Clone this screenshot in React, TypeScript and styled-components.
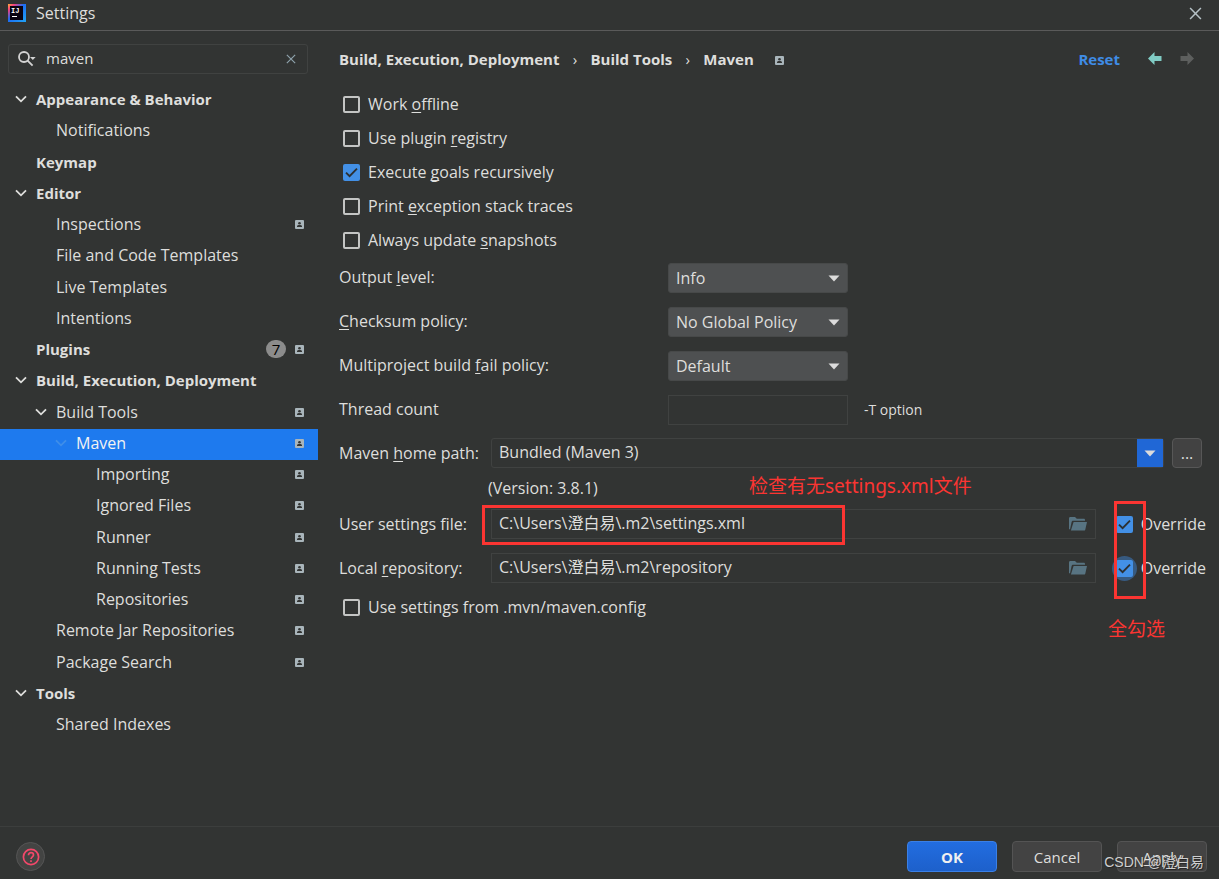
import React, { useState } from 'react';
import styled, { createGlobalStyle, css } from 'styled-components';

const color = {
  bg: '#323433',
  text: '#dededc',
  border: '#404241',
  line: '#5a5a5a',
  blue: '#1e7aee',
  link: '#3f8ce6',
  mark: '#fb3532',
  badge: '#a9b5bb',
  folder: '#587482',
};

const Global = createGlobalStyle`
  *, *::before, *::after { box-sizing: border-box; }
  body {
    margin: 0;
    background: ${color.bg};
    color: ${color.text};
    font: 16px/20px 'Open Sans', 'Noto Sans CJK SC', sans-serif;
  }
  button, input, select { font: inherit; color: inherit; margin: 0; }
  button { padding: 0; border: 0; background: none; }
`;

const Window = styled.div`
  display: flex;
  flex-direction: column;
  min-height: 100vh;
`;

const TitleBar = styled.header`
  display: flex;
  align-items: center;
  height: 31px;
  padding: 0 17px 4px 8px;
  gap: 10px;
  border-bottom: 1px solid ${color.line};
`;

const Title = styled.h1`
  flex: 1;
  margin: 0;
  font-size: 16px;
  font-weight: 400;
`;

const IconButton = styled.button`
  display: grid;
  place-items: center;
`;

const Body = styled.div`
  display: flex;
  flex: 1;
`;

const Sidebar = styled.aside`
  flex: 0 0 318px;
  padding-top: 13px;
`;

const SearchBox = styled.label`
  display: flex;
  align-items: center;
  height: 30px;
  margin: 0 10px 11px 8px;
  padding: 0 11px 0 9px;
  gap: 10px;
  border: 1px solid ${color.border};
  border-radius: 3px;
`;

const SearchInput = styled.input`
  flex: 1;
  min-width: 0;
  padding: 0 0 2px;
  border: 0;
  outline: 0;
  background: none;
  font-size: 15px;
`;

const Tree = styled.ul`
  margin: 0;
  padding: 0;
  list-style: none;
`;

const TreeItem = styled.li`
  &:nth-child(4n + 2) { margin-bottom: 1px; }
`;

const TreeRow = styled.button<{ $depth: number; $bold?: boolean; $selected?: boolean }>`
  display: flex;
  align-items: center;
  width: 100%;
  height: 31px;
  padding: 0 14px 3px ${(p) => 15 + p.$depth * 20}px;
  gap: 9px;
  text-align: left;
  font-size: ${(p) => (p.$bold ? 15 : 16)}px;
  font-weight: ${(p) => (p.$bold ? 700 : 400)};
  ${(p) => p.$selected && css`
    background: ${color.blue};
    color: #f2f2f2;
  `}
`;

const Twisty = styled.span<{ $dim?: boolean }>`
  display: grid;
  place-items: center;
  width: 12px;
  color: ${(p) => (p.$dim ? '#3f8ee8' : color.text)};
`;

const TreeLabel = styled.span`
  flex: 1;
`;

const Count = styled.span`
  width: 20px;
  height: 18px;
  border-radius: 9px;
  background: #8c8c8c;
  color: #000;
  line-height: 18px;
  text-align: center;
  font-weight: 400;
`;

const Main = styled.main`
  flex: 1;
  min-width: 0;
  padding: 13px 13px 0 21px;
`;

const Crumbs = styled.nav`
  display: flex;
  align-items: center;
  height: 31px;
  margin-bottom: 12px;
  padding: 0 11px 2px 0;
  font-size: 15px;
  font-weight: 700;
`;

const CrumbSeparator = styled.span`
  width: 31px;
  text-align: center;
  font-weight: 400;
`;

const CrumbBadge = styled.span`
  flex: 1;
  padding-left: 21px;
`;

const ResetLink = styled.a`
  margin-right: 27px;
  color: ${color.link};
  text-decoration: none;
`;

const HistoryButton = styled(IconButton)<{ $off?: boolean }>`
  width: 16px;
  margin-right: ${(p) => (p.$off ? 0 : 16)}px;
  color: ${(p) => (p.$off ? '#5d5f5e' : '#80cbc4')};
`;

const CheckLabel = styled.label`
  display: flex;
  align-items: center;
  height: 34px;
  gap: 8px;
`;

const CheckRow = styled(CheckLabel)`
  padding-left: 4px;
`;

const Tick = styled.span<{ $focus?: boolean }>`
  display: grid;
  place-items: center;
  width: 17px;
  height: 17px;
  border-radius: 50%;
  box-shadow: ${(p) => (p.$focus ? '0 0 0 4px #375a80' : 'none')};
  background: ${(p) => (p.$focus ? '#375a80' : 'none')};
  > * { grid-area: 1 / 1; }
  svg { pointer-events: none; }
`;

const TickInput = styled.input`
  appearance: none;
  width: 17px;
  height: 17px;
  border: 2px solid #c4c5c4;
  border-radius: 2px;
  &:checked {
    border: 0;
    background: #4390e6;
  }
`;

const Mnemonic = styled.span`
  text-decoration: underline;
  text-underline-offset: 2px;
  text-decoration-skip-ink: none;
`;

const Fields = styled.div`
  display: grid;
  grid-template-columns: 329px 1fr;
  grid-auto-rows: 30px;
  row-gap: 14px;
  align-items: center;
  margin: 6px 0 13px;
`;

const FieldLabel = styled.label`
  padding-bottom: 3px;
`;

const SelectBox = styled.span`
  display: grid;
  align-items: center;
  width: 180px;
  > * { grid-area: 1 / 1; }
  svg { justify-self: end; margin-right: 8px; pointer-events: none; }
`;

const Select = styled.select`
  appearance: none;
  width: 100%;
  height: 30px;
  padding: 0 30px 0 7px;
  border: 1px solid #474949;
  border-radius: 3px;
  background: #4e5051;
`;

const Inline = styled.div`
  display: flex;
  align-items: center;
  gap: 16px;
`;

const ThreadInput = styled.input`
  width: 180px;
  height: 30px;
  border: 1px solid ${color.border};
  background: none;
`;

const Hint = styled.span`
  font-size: 14px;
`;

const PathRow = styled.div<{ $end?: number }>`
  position: relative;
  display: flex;
  align-items: center;
  height: 30px;
  padding-right: ${(p) => p.$end ?? 0}px;
`;

const PathGroup = styled.div`
  display: grid;
  row-gap: 14px;
  margin-bottom: 7px;
`;

const PathLabel = styled.label`
  flex: 0 0 152px;
`;

const PathBox = styled.div<{ $round?: boolean }>`
  display: flex;
  flex: 1;
  align-items: center;
  height: 30px;
  border: 1px solid ${color.border};
  border-radius: ${(p) => (p.$round ? 3 : 0)}px;
`;

const PathInput = styled.input`
  flex: 1;
  min-width: 0;
  padding: 0 7px 2px;
  border: 0;
  outline: 0;
  background: none;
`;

const BrowseButton = styled(IconButton)`
  margin-right: 8px;
`;

const DropButton = styled(IconButton)`
  align-self: stretch;
  width: 26px;
  background: #2067d6;
`;

const MoreButton = styled.button`
  width: 30px;
  height: 30px;
  margin-left: 8px;
  border: 1px solid #575757;
  border-radius: 4px;
  background: #424242;
`;

const OverrideLabel = styled(CheckLabel)`
  margin-left: 20px;
`;

const Version = styled.p`
  margin: 0;
  padding-left: 149px;
  height: 41px;
  line-height: 41px;
`;

const Frame = styled.div`
  position: absolute;
  border: 3px solid ${color.mark};
  pointer-events: none;
`;

const FileFrame = styled(Frame)`
  left: 143px;
  top: -4px;
  width: 363px;
  height: 40px;
`;

const TickFrame = styled(Frame)`
  right: 60px;
  top: -52px;
  width: 32px;
  height: 98px;
`;

const Note = styled.span`
  position: absolute;
  color: ${color.mark};
  font: 19px/24px 'Noto Sans', 'Noto Sans CJK SC', sans-serif;
  white-space: nowrap;
`;

const FileNote = styled(Note)`
  left: 410px;
  top: -35px;
`;

const TickNote = styled(Note)`
  right: 41px;
  top: 64px;
`;

const Footer = styled.footer`
  position: relative;
  display: flex;
  align-items: center;
  gap: 15px;
  padding: 14px 12px 7px 16px;
  border-top: 1px solid #3c3e3d;
`;

const HelpButton = styled(IconButton)`
  width: 29px;
  height: 29px;
  margin-right: auto;
  border: 1px solid #555;
  border-radius: 50%;
  background: #434443;
`;

const ActionButton = styled.button<{ $primary?: boolean }>`
  width: 90px;
  height: 31px;
  border: 1px solid ${(p) => (p.$primary ? '#3b80e6' : '#545454')};
  border-radius: 4px;
  background: ${(p) => (p.$primary ? 'linear-gradient(#226de0, #1d60cb)' : '#434343')};
  color: ${(p) => (p.$primary ? '#f0f0f0' : color.text)};
  font-size: 15px;
  font-weight: ${(p) => (p.$primary ? 700 : 400)};
`;

const Watermark = styled.span`
  position: absolute;
  right: 15px;
  bottom: 7px;
  color: #cfcfcf;
  font: 14px/20px 'Liberation Sans', 'Noto Sans CJK SC', sans-serif;
  text-shadow: 1px 1px 1px #222;
  pointer-events: none;
`;

const LogoIcon = () => (
  <svg width="18" height="18" viewBox="0 0 18 18" aria-hidden="true">
    <defs>
      <linearGradient id="logo" x1="0" y1="0" x2="1" y2="1">
        <stop offset="0" stopColor="#fdb03c" />
        <stop offset="0.18" stopColor="#f8407c" />
        <stop offset="0.45" stopColor="#1c6cf2" />
        <stop offset="1" stopColor="#20a5f5" />
      </linearGradient>
    </defs>
    <rect width="18" height="18" fill="url(#logo)" />
    <rect x="2" y="2" width="13" height="14" fill="#0a0310" />
    <text x="3" y="9" fill="#fff" fontSize="7" fontWeight="700" fontFamily="Liberation Mono, monospace">IJ</text>
    <rect x="4" y="12" width="5" height="1" fill="#fff" />
  </svg>
);

const CloseIcon = ({ size, stroke }: { size: number; stroke: string }) => (
  <svg width={size} height={size} viewBox="0 0 12 12" fill="none" stroke={stroke} strokeWidth="1.4" aria-hidden="true">
    <path d="M1 1l10 10M11 1L1 11" />
  </svg>
);

const SearchIcon = () => (
  <svg width="18" height="16" viewBox="0 0 18 16" fill="none" stroke="#d4d4d4" strokeWidth="1.8" aria-hidden="true">
    <circle cx="6" cy="6" r="5" />
    <path d="M9.6 9.6l5 5" />
    <path d="M12 6h5.6l-2.8 3z" fill="#d4d4d4" stroke="none" />
  </svg>
);

const ChevronIcon = () => (
  <svg width="12" height="8" viewBox="0 0 12 8" fill="none" stroke="currentColor" strokeWidth="1.8" aria-hidden="true">
    <path d="M1 1.3l5 5 5-5" />
  </svg>
);

const ProjectBadge = () => (
  <svg width="9" height="9" viewBox="0 0 9 9" aria-hidden="true">
    <rect width="9" height="9" rx="1" fill={color.badge} />
    <circle cx="4.5" cy="3.2" r="1.3" fill={color.bg} />
    <path d="M2 7V6.200c0-.8 1.200-1.200 2.500-1.200S7 5.400 7 6.200V7z" fill={color.bg} />
  </svg>
);

const CheckIcon = () => (
  <svg width="17" height="17" viewBox="0 0 17 17" fill="none" stroke="#2c3033" strokeWidth="1.9" aria-hidden="true">
    <path d="M3 8.6l3.6 3.6L14 4.6" />
  </svg>
);

const TriangleIcon = () => (
  <svg width="12" height="7" viewBox="0 0 12 7" fill="#dcdcdc" aria-hidden="true">
    <path d="M.5.5h11L6 6.5z" />
  </svg>
);

const FolderIcon = () => (
  <svg width="18" height="14" viewBox="0 0 18 14" fill={color.folder} aria-hidden="true">
    <path d="M0 12V1.5C0 .7.5 0 1.3 0H6l1.8 1.8h7c.7 0 1.2.5 1.2 1.2v.8H4.3c-.9 0-1.5.4-1.7 1.2L1 12.5z" />
    <path d="M4.6 5H18l-1.7 7.4c-.2.8-.7 1.2-1.5 1.2H1.9z" />
  </svg>
);

const ArrowIcon = ({ flip }: { flip?: boolean }) => (
  <svg width="14" height="13" viewBox="0 0 14 13" fill="currentColor" aria-hidden="true">
    <path d={flip ? 'M14 6.5L7.5 0v4H.5v5h7v4z' : 'M0 6.5L6.5 0v4h7v5h-7v4z'} />
  </svg>
);

const HelpIcon = () => (
  <svg width="18" height="18" viewBox="0 0 18 18" fill="none" stroke="#f2486a" strokeWidth="1.7" aria-hidden="true">
    <circle cx="9" cy="9" r="7.6" />
    <path d="M6.500 7.2c0-1.5 1.1-2.500 2.500-2.500s2.500 1 2.500 2.300c0 1.700-2.500 2-2.500 4" />
    <path d="M9 12.2v1.7" />
  </svg>
);

type Node = { label: string; depth: number; bold?: boolean; open?: boolean; badge?: boolean; count?: number };

const nodes: Node[] = [
  { label: 'Appearance & Behavior', depth: 0, bold: true, open: true },
  { label: 'Notifications', depth: 1 },
  { label: 'Keymap', depth: 0, bold: true },
  { label: 'Editor', depth: 0, bold: true, open: true },
  { label: 'Inspections', depth: 1, badge: true },
  { label: 'File and Code Templates', depth: 1 },
  { label: 'Live Templates', depth: 1 },
  { label: 'Intentions', depth: 1 },
  { label: 'Plugins', depth: 0, bold: true, badge: true, count: 7 },
  { label: 'Build, Execution, Deployment', depth: 0, bold: true, open: true },
  { label: 'Build Tools', depth: 1, open: true, badge: true },
  { label: 'Maven', depth: 2, open: true, badge: true },
  { label: 'Importing', depth: 3, badge: true },
  { label: 'Ignored Files', depth: 3, badge: true },
  { label: 'Runner', depth: 3, badge: true },
  { label: 'Running Tests', depth: 3, badge: true },
  { label: 'Repositories', depth: 3, badge: true },
  { label: 'Remote Jar Repositories', depth: 1, badge: true },
  { label: 'Package Search', depth: 1, badge: true },
  { label: 'Tools', depth: 0, bold: true, open: true },
  { label: 'Shared Indexes', depth: 1 },
];

const options = [
  { text: 'Work &offline', on: false },
  { text: 'Use plugin &registry', on: false },
  { text: 'Execute &goals recursively', on: true },
  { text: 'Print &exception stack traces', on: false },
  { text: 'Always update &snapshots', on: false },
];

const selects = [
  { id: 'output', text: 'Output &level:', values: ['Info', 'Debug', 'Warn'] },
  { id: 'checksum', text: '&Checksum policy:', values: ['No Global Policy', 'Fail', 'Warn'] },
  { id: 'fail', text: 'Multiproject build &fail policy:', values: ['Default', 'Fail Fast', 'Never Fail'] },
];

/* The letter after "&" is the keyboard mnemonic and is underlined. */
const Caption = ({ text }: { text: string }) => {
  const at = text.indexOf('&');
  if (at < 0) return <span>{text}</span>;
  return (
    <span>
      {text.slice(0, at)}
      <Mnemonic>{text[at + 1]}</Mnemonic>
      {text.slice(at + 2)}
    </span>
  );
};

const Checkbox = ({ on: initial, focus }: { on: boolean; focus?: boolean }) => {
  const [on, setOn] = useState(initial);
  return (
    <Tick $focus={focus}>
      <TickInput type="checkbox" checked={on} onChange={() => setOn(!on)} />
      {on && <CheckIcon />}
    </Tick>
  );
};

export default function App() {
  const [selected, setSelected] = useState('Maven');
  const [query, setQuery] = useState('maven');

  return (
    <Window>
      <Global />
      <TitleBar>
        <LogoIcon />
        <Title>Settings</Title>
        <IconButton aria-label="Close"><CloseIcon size={13} stroke="#b4c0c5" /></IconButton>
      </TitleBar>

      <Body>
        <Sidebar>
          <SearchBox>
            <SearchIcon />
            <SearchInput aria-label="Search settings" value={query} onChange={(e) => setQuery(e.target.value)} />
            <IconButton aria-label="Clear" onClick={() => setQuery('')}><CloseIcon size={10} stroke="#8fa3ad" /></IconButton>
          </SearchBox>
          <Tree>
            {nodes.map((n) => (
              <TreeItem key={n.label}>
                <TreeRow $depth={n.depth} $bold={n.bold} $selected={n.label === selected} onClick={() => setSelected(n.label)}>
                  <Twisty $dim={n.label === selected}>{n.open && <ChevronIcon />}</Twisty>
                  <TreeLabel>{n.label}</TreeLabel>
                  {n.count && <Count>{n.count}</Count>}
                  {n.badge && <ProjectBadge />}
                </TreeRow>
              </TreeItem>
            ))}
          </Tree>
        </Sidebar>

        <Main>
          <Crumbs aria-label="Breadcrumb">
            <span>Build, Execution, Deployment</span>
            <CrumbSeparator>›</CrumbSeparator>
            <span>Build Tools</span>
            <CrumbSeparator>›</CrumbSeparator>
            <span>Maven</span>
            <CrumbBadge><ProjectBadge /></CrumbBadge>
            <ResetLink href="#reset">Reset</ResetLink>
            <HistoryButton aria-label="Back"><ArrowIcon /></HistoryButton>
            <HistoryButton aria-label="Forward" $off><ArrowIcon flip /></HistoryButton>
          </Crumbs>

          {options.map((o) => (
            <CheckRow key={o.text}>
              <Checkbox on={o.on} />
              <Caption text={o.text} />
            </CheckRow>
          ))}

          <Fields>
            {selects.map((s) => (
              <React.Fragment key={s.id}>
                <FieldLabel htmlFor={s.id}><Caption text={s.text} /></FieldLabel>
                <SelectBox>
                  <Select id={s.id}>{s.values.map((v) => <option key={v}>{v}</option>)}</Select>
                  <TriangleIcon />
                </SelectBox>
              </React.Fragment>
            ))}
            <FieldLabel htmlFor="threads">Thread count</FieldLabel>
            <Inline>
              <ThreadInput id="threads" />
              <Hint>-T option</Hint>
            </Inline>
          </Fields>

          <PathRow $end={4}>
            <PathLabel htmlFor="home"><Caption text="Maven &home path:" /></PathLabel>
            <PathBox $round>
              <PathInput id="home" defaultValue="Bundled (Maven 3)" />
              <DropButton aria-label="Show versions"><TriangleIcon /></DropButton>
            </PathBox>
            <MoreButton aria-label="Browse">...</MoreButton>
          </PathRow>
          <Version>(Version: 3.8.1)</Version>
          <PathGroup>
            <PathRow>
              <PathLabel htmlFor="user">User settings file:</PathLabel>
              <PathBox>
                <PathInput id="user" defaultValue="C:\Users\澄白易\.m2\settings.xml" />
                <BrowseButton aria-label="Browse settings file"><FolderIcon /></BrowseButton>
              </PathBox>
              <OverrideLabel><Checkbox on />Override</OverrideLabel>
              <FileFrame />
              <FileNote>检查有无settings.xml文件</FileNote>
            </PathRow>
            <PathRow>
              <PathLabel htmlFor="repo"><Caption text="Local &repository:" /></PathLabel>
              <PathBox>
                <PathInput id="repo" defaultValue="C:\Users\澄白易\.m2\repository" />
                <BrowseButton aria-label="Browse repository"><FolderIcon /></BrowseButton>
              </PathBox>
              <OverrideLabel><Checkbox on focus />Override</OverrideLabel>
              <TickFrame />
              <TickNote>全勾选</TickNote>
            </PathRow>
          </PathGroup>
          <CheckRow>
            <Checkbox on={false} />
            <Caption text="Use settings from .mvn/maven.config" />
          </CheckRow>
        </Main>
      </Body>

      <Footer>
        <HelpButton aria-label="Help"><HelpIcon /></HelpButton>
        <ActionButton $primary>OK</ActionButton>
        <ActionButton>Cancel</ActionButton>
        <ActionButton><Caption text="&Apply" /></ActionButton>
        <Watermark>CSDN @澄白易</Watermark>
      </Footer>
    </Window>
  );
}
